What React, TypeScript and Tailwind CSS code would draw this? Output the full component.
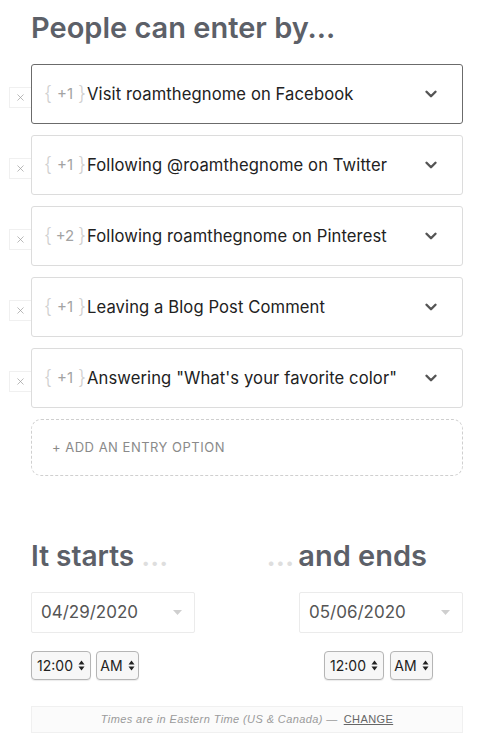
import { ChevronDown, X } from 'lucide-react';

const entries = [
  { pts: '+1', label: 'Visit roamthegnome on Facebook', active: true },
  { pts: '+1', label: 'Following @roamthegnome on Twitter' },
  { pts: '+2', label: 'Following roamthegnome on Pinterest' },
  { pts: '+1', label: 'Leaving a Blog Post Comment' },
  { pts: '+1', label: 'Answering "What\'s your favorite color"' },
];

function UpDown() {
  return (
    <svg width="7" height="11" viewBox="0 0 7 11" className="ml-[5px]">
      <path d="M3.5 0.5 L6.5 4.5 H0.5 Z" fill="#222" />
      <path d="M3.5 10.5 L6.5 6.5 H0.5 Z" fill="#222" />
    </svg>
  );
}

function TimeSelect({ value, width }: { value: string; width: string }) {
  return (
    <div
      className={`${width} h-[29px] flex items-center justify-center rounded-[4px] border border-[#b5b5b5] bg-[#f7f7f7] text-[14px] text-[#222] shadow-[0_1px_1px_rgba(0,0,0,0.08)]`}
    >
      {value}
      <UpDown />
    </div>
  );
}

function DateInput({ value }: { value: string }) {
  return (
    <div className="w-[164px] h-[41px] flex items-center justify-between border border-[#ebebeb] rounded-[2px] pl-[9px] pr-[12px]">
      <span className="text-[17px] text-[#555]">{value}</span>
      <svg width="9" height="5" viewBox="0 0 9 5">
        <path d="M0 0 H9 L4.5 5 Z" fill="#cfcfcf" />
      </svg>
    </div>
  );
}

export default function App() {
  return (
    <div
      className="w-[495px] h-[739px] bg-white overflow-hidden"
      style={{ fontFamily: 'Inter, Lato, sans-serif' }}
    >
      <div className="pl-[31px] pr-[32px]">
        <h1 className="pt-[8px] text-[29px] leading-[40px] font-semibold text-[#5c6068]">
          People can enter by...
        </h1>

        <div className="mt-[16px] flex flex-col gap-[11px]">
          {entries.map((e, i) => (
            <div key={i} className="relative">
              <div className="absolute left-[-22px] top-[23px] w-[22px] h-[21px] flex items-center justify-center border border-[#f0f0f0] border-r-0 bg-white">
                <X size={11} strokeWidth={1.5} color="#9a9a9a" />
              </div>
              <div
                className={`h-[60px] flex items-center justify-between rounded-[3px] border bg-white pl-[12px] pr-[22px] ${
                  e.active ? 'border-[#6b6b6b]' : 'border-[#dcdcdc]'
                }`}
              >
                <div className="flex items-center">
                  <span className="w-[42px] flex items-center justify-between text-[16px]">
                    <span className="text-[#cfcfcf] font-light text-[19px]">{'{'}</span>
                    <span className="text-[#a3a3a3] text-[15px]">{e.pts}</span>
                    <span className="text-[#cfcfcf] font-light text-[19px]">{'}'}</span>
                  </span>
                  <span className="ml-[1px] text-[#222] text-[16.6px] tracking-[0.1px]">{e.label}</span>
                </div>
                <ChevronDown size={18} strokeWidth={3.2} color="#555" />
              </div>
            </div>
          ))}

          <div className="h-[57px] flex items-center rounded-[10px] border border-dashed border-[#cfcfcf] pl-[20px] text-[13px] tracking-[0.5px] text-[#8a8a8a]">
            + ADD AN ENTRY OPTION
          </div>
        </div>

        <div className="mt-[60px] flex justify-between">
          <div className="flex flex-col">
            <h2 className="text-[28px] leading-[40px] font-semibold text-[#5c6068]">
              It starts <span className="text-[#dedede]">...</span>
            </h2>
            <div className="mt-[16px]">
              <DateInput value="04/29/2020" />
            </div>
            <div className="mt-[18px] flex gap-[5px]">
              <TimeSelect value="12:00" width="w-[60px]" />
              <TimeSelect value="AM" width="w-[43px]" />
            </div>
          </div>
          <div className="flex flex-col items-end">
            <h2 className="text-[29px] leading-[40px] font-semibold text-[#5c6068] mr-[36px]">
              <span className="text-[#dedede] mr-[4px]">...</span>and ends
            </h2>
            <div className="mt-[16px]">
              <DateInput value="05/06/2020" />
            </div>
            <div className="mt-[18px] flex gap-[6px] mr-[30px]">
              <TimeSelect value="12:00" width="w-[60px]" />
              <TimeSelect value="AM" width="w-[43px]" />
            </div>
          </div>
        </div>

        <div
          className="mt-[26px] h-[27px] flex items-center justify-center border border-[#f0f0f0] bg-[#fbfbfb] text-[11px] tracking-[0.4px] text-[#9a9a9a]"
          style={{ fontFamily: '"Liberation Sans", Arial, sans-serif' }}
        >
          <span className="italic">Times are in Eastern Time (US &amp; Canada) —</span>
          <span className="ml-[6px] underline text-[#666]">CHANGE</span>
        </div>
      </div>
    </div>
  );
}
